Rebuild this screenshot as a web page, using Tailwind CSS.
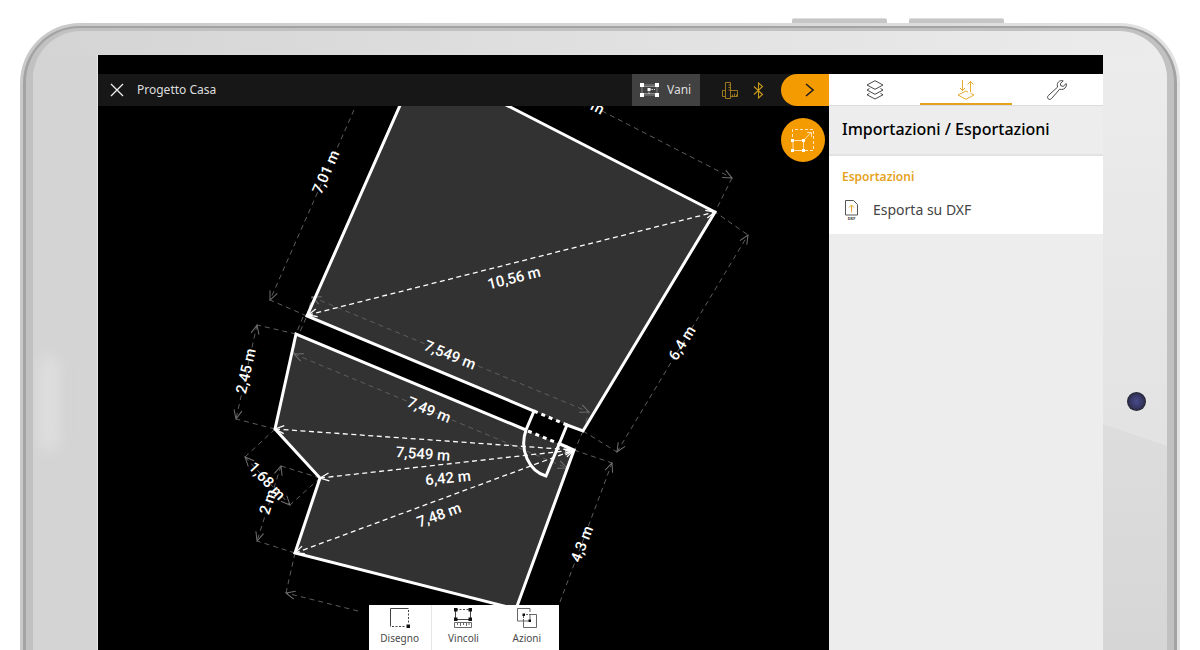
<!DOCTYPE html>
<html lang="it">
<head>
  <meta charset="UTF-8" />
  <meta name="viewport" content="width=device-width, initial-scale=1" />
  <title>Progetto Casa</title>
  <script src="https://cdn.jsdelivr.net/npm/@tailwindcss/browser@4"></script>
</head>
<body class="bg-white h-screen overflow-hidden flex flex-col px-5 font-['Noto_Sans',sans-serif]">

  <!-- Side keys of the tablet -->
  <div class="h-[23px] shrink-0 flex items-end justify-end gap-[22px] pr-[176px]">
    <div class="w-[95px] h-[5px] rounded-t-xs bg-[#c6c6c6] border-t border-[#dedede]"></div>
    <div class="w-[95px] h-[5px] rounded-t-xs bg-[#c6c6c6] border-t border-[#dedede]"></div>
  </div>

  <!-- Tablet frame -->
  <div class="flex-1 min-h-0 flex rounded-t-[60px] bg-[linear-gradient(to_right,#c9c9c9,#e2e2e2)] px-[3px] pt-[3px]">
    <div class="flex-1 flex rounded-t-[57px] bg-[#a3a3a3] px-[3px] pt-[2px]">
      <div class="flex-1 flex rounded-t-[54px] bg-[#c1c1c1] px-[7px] pt-[3px]">
        <div class="flex-1 min-w-0 flex flex-col rounded-t-[48px] overflow-hidden bg-[linear-gradient(to_right,#d4d4d4,#ececec)] pt-6">
          <div class="flex-1 min-h-0 flex">

            <!-- Left bezel -->
            <div class="w-[65px] shrink-0 relative bg-[#d4d4d4] border-r border-[#e8e8e8]">
              <div class="absolute left-2 top-[300px] w-4 h-24 rounded-full bg-[#e1e1e1] blur-sm"></div>
            </div>

            <!-- Screen -->
            <div class="flex-1 min-w-0 flex flex-col bg-black">
              <div class="h-[19px] shrink-0"></div>
              <div class="flex-1 min-h-0 flex">

                <main class="flex-1 min-w-0 flex flex-col">
                  <header class="h-8 shrink-0 flex items-center bg-[#171717] text-[#dedede]">
                    <button aria-label="Chiudi" class="ml-3 w-[14px] h-[14px]">
                      <svg viewBox="0 0 14 14" fill="none" stroke="#eee" stroke-width="1.3"><path d="M1 1l12 12M13 1L1 13" /></svg>
                    </button>
                    <h1 class="ml-[13px] text-[12px] leading-4">Progetto Casa</h1>
                    <button class="ml-auto h-8 w-[68px] flex items-center gap-2 pl-2 bg-[#414141] text-[12px] leading-4">
                      <svg class="w-[19px] h-[14px]" viewBox="0 0 19 14" fill="none" stroke="#aaa">
                        <path d="M2 2h15v10H2zM1 3.500h17M1 10.500h17" stroke-width=".7" />
                        <path d="M9 6.500h6M9 7v4" stroke="#ddd" stroke-dasharray="1.500 1" />
                        <path d="M0 0h4v4H0zM15 0h4v4h-4zM0 10h4v4H0zM15 10h4v4h-4zM7.500 5h3v3h-3z" fill="#fff" stroke="none" />
                      </svg>
                      Vani
                    </button>
                    <button aria-label="Misure" class="ml-[22px] w-4 h-[17px]">
                      <svg viewBox="0 0 16 17" fill="none" stroke="#a98220" stroke-width=".9">
                        <path d="M3.500.5h5v16h-5zM3.500 8.500h-3v6h3M8.500 8.500h7v6h-7M6.500 3h2M6.500 5.500h2M6.500 8h2M10.500 14.500v-2M12.500 14.500v-3M14.500 14.500v-2" />
                      </svg>
                    </button>
                    <button aria-label="Bluetooth" class="ml-[15px] w-[11px] h-[17px]">
                      <svg viewBox="0 0 11 17" fill="none" stroke="#c79a1c" stroke-width="1.100"><path d="M1 4.500l8.500 8L5.500 16V1l4 3.500-8.500 8" /></svg>
                    </button>
                    <button aria-label="Comprimi pannello" class="ml-[17px] w-12 h-8 rounded-l-full bg-[#f39b00] flex items-center justify-center pl-2">
                      <svg class="w-[9px] h-[14px]" viewBox="0 0 9 14" fill="none" stroke="#1c1c1c" stroke-width="1.500"><path d="M1 1l7 6-7 6" /></svg>
                    </button>
                  </header>

                  <!-- Floor plan -->
                  <div class="flex-1 min-h-0 relative overflow-hidden">
                    <svg class="w-full h-full" viewBox="98 106 731 544" preserveAspectRatio="xMinYMin slice" fill="none">
                      <defs>
                        <marker id="arrow" viewBox="0 0 12 10" refX="11" refY="5" markerWidth="12" markerHeight="10" markerUnits="userSpaceOnUse" orient="auto-start-reverse">
                          <path d="M2 1l9 4-9 4" stroke="#fff" stroke-width="1.300" fill="none" />
                        </marker>
                        <marker id="arrow-dim" viewBox="0 0 12 10" refX="11" refY="5" markerWidth="12" markerHeight="10" markerUnits="userSpaceOnUse" orient="auto-start-reverse">
                          <path d="M2 1l9 4-9 4" stroke="#707070" fill="none" />
                        </marker>
                      </defs>

                      <!-- rooms -->
                      <g fill="#323232">
                        <path d="M409 85L307 316 534 411 567 425 583 431 715 212 473 88z" />
                        <path d="M296 334L275 429 320 478 295 553 516 609 574 450z" />
                      </g>

                      <!-- outer dimensions -->
                      <g stroke="#5e5e5e" stroke-dasharray="5 4">
                        <path d="M307 316L270 300M732 178L715 212L748 235M583 431L617 452M574 450L612 463M307 316L312 297M583 431L589 412M306 318L299 334M303 317L296 334M296 334L294 354M583 431L567 468" />
                        <path d="M296 334L257 325M275 429L236 419M275 429L245 457M320 478L290 505M320 478L281 466M295 553L257 541M295 553L286 593" />
                        <g marker-end="url(#arrow-dim)">
                          <path d="M354 110L270 300" />
                          <path d="M602 111L732 178" />
                          <path d="M560 602L612 463" />
                          <path d="M358 611L286 593" />
                        </g>
                        <g marker-start="url(#arrow-dim)" marker-end="url(#arrow-dim)">
                          <path d="M617 452L748 235" />
                          <path d="M312 297L589 412" />
                          <path d="M294 354L567 468" />
                          <path d="M257 325L236 419" />
                          <path d="M245 457L290 505" />
                          <path d="M281 466L257 541" />
                        </g>
                      </g>

                      <!-- diagonals -->
                      <g stroke="#fff" stroke-width="1.300" stroke-dasharray="5 3.500" marker-start="url(#arrow)" marker-end="url(#arrow)">
                        <path d="M308 315L715 212" />
                        <path d="M275 429L574 450" />
                        <path d="M320 478L574 450" />
                        <path d="M295 553L574 450" />
                      </g>

                      <!-- walls and door -->
                      <g stroke="#fff" stroke-width="3">
                        <path d="M409 85L307 316 534 411 526 430C519 450 529 471 546 476L567 425 583 431 715 212 473 88" />
                        <path d="M526 430L296 334 275 429 320 478 295 553 516 609 574 450 560 444" />
                        <path d="M534 411L567 425M528 431L560 444" stroke-dasharray="4 4" />
                      </g>

                      <g fill="#fff" text-anchor="middle" class="[font-family:Roboto,sans-serif] font-medium text-[15px]">
                        <text transform="translate(326 172) rotate(-66)" y="5">7,01 m</text>
                        <text transform="translate(583 100) rotate(27)" y="5">7,04 m</text>
                        <text transform="translate(682 343) rotate(-58)" y="5">6,4 m</text>
                        <text transform="translate(582 544) rotate(-69)" y="5">4,3 m</text>
                        <text transform="translate(514 278) rotate(-14)" y="5">10,56 m</text>
                        <text transform="translate(450 355) rotate(22)" y="5">7,549 m</text>
                        <text transform="translate(429 410) rotate(22)" y="5">7,49 m</text>
                        <text transform="translate(423 454) rotate(4)" y="5">7,549 m</text>
                        <text transform="translate(448 478) rotate(-6)" y="5">6,42 m</text>
                        <text transform="translate(439 515) rotate(-20)" y="5">7,48 m</text>
                        <text transform="translate(246 371) rotate(-77)" y="5">2,45 m</text>
                        <text transform="translate(267 481) rotate(47)" y="5">1,68 m</text>
                        <text transform="translate(268 502) rotate(-72)" y="5">2 m</text>
                      </g>
                    </svg>

                    <button aria-label="Ridimensiona" class="absolute top-3 right-1 w-11 h-11 rounded-full bg-[#f39b00] flex items-center justify-center">
                      <svg class="w-6 h-6" viewBox="0 0 24 24" fill="none" stroke="#ffe9c4">
                        <path d="M1.500 9V1.500h21v21H14" stroke-dasharray="3 2" />
                        <path d="M2 12.500h10.500v10H2zM12.500 12.500l7.500-8M16 4.500h4.500V9" stroke-width=".9" />
                        <path d="M0 11h3v3H0zM11 11h3v3h-3zM0 21h3v3H0zM11 21h3v3h-3z" fill="#fff" stroke="none" />
                      </svg>
                    </button>

                    <!-- Bottom toolbar -->
                    <nav class="absolute bottom-0 left-1/2 -translate-x-1/2 w-[190px] h-[45px] grid grid-cols-3 bg-white text-[#4a4a4a] text-[10px] leading-4">
                      <button class="flex flex-col items-center justify-start pt-[3px] gap-[2px] border-r border-[#e6e6e6]">
                        <svg class="w-5 h-5" viewBox="0 0 20 20" fill="none" stroke="#444">
                          <path d="M18.500.5H.5v18" />
                          <path d="M18.500 2v14M2 18.500h14" stroke-dasharray="2 1.500" />
                          <path d="M16.500 16.500h3.500v3.500h-3.500z" fill="#111" stroke="none" />
                        </svg>
                        Disegno
                      </button>
                      <button class="flex flex-col items-center justify-start pt-[3px] gap-[2px]">
                        <svg class="w-5 h-5" viewBox="0 0 20 20" fill="none" stroke="#444">
                          <path d="M2.500 2v10M17.500 2v10M3 11.500h14" />
                          <path d="M3 1.500h14" stroke-dasharray="2 1.500" />
                          <path d="M1.500 14.500h17v5h-17zM4.500 15v2M7.500 15v3M10.500 15v2M13.500 15v3M16 15v2" stroke-width=".8" />
                          <path d="M1 0h3.500v3.500H1zM15.500 0H19v3.500h-3.500zM1 9.500h3.500V13H1zM15.500 9.500H19V13h-3.500z" fill="#111" stroke="none" />
                        </svg>
                        Vincoli
                      </button>
                      <button class="flex flex-col items-center justify-start pt-[3px] gap-[2px]">
                        <svg class="w-5 h-5" viewBox="0 0 20 20" fill="none" stroke="#555" stroke-width=".9">
                          <path d="M13 4V.5H.5v12.500H6M13 6.500h6.500v13H6.500V13M13 6.500v6.500H6.500" />
                          <path d="M6.500 13V6.500H13" stroke-dasharray="2 1" />
                          <path d="M5.500 5.500H8V8H5.500zM11.500 11.500H14V14h-2.500z" fill="#111" stroke="none" />
                        </svg>
                        Azioni
                      </button>
                    </nav>
                  </div>
                </main>

                <!-- Side panel -->
                <aside class="w-[274px] shrink-0 flex flex-col bg-[#ededed]">
                  <nav class="h-8 shrink-0 grid grid-cols-3 bg-white border-b border-[#dcdcdc]">
                    <button aria-label="Livelli" class="flex items-center justify-center">
                      <svg class="w-[18px] h-5" viewBox="0 0 18 20" fill="none" stroke="#333" stroke-width=".9">
                        <path d="M9 .7l8 4.300-8 4.300L1 5z" />
                        <path d="M3.500 8.500L1 10l8 4.300L17 10l-2.500-1.500M3.500 13.300L1 14.800 9 19l8-4.200-2.500-1.500" />
                      </svg>
                    </button>
                    <button aria-label="Importazioni / Esportazioni" class="flex items-center justify-center pt-[3px] border-b-2 border-[#e5a21c]">
                      <svg class="w-[18px] h-5" viewBox="0 0 18 20" fill="none" stroke="#e5a21c" stroke-width=".9">
                        <path d="M5.500 0v10.500M3 8l2.500 2.500L8 8M13.500 12V1.500M10.500 4.500l3-3 3 3M7 12l-6 3 8 4.300 8-4.300-3.500-1.800M7 12l2-1 2 1" />
                      </svg>
                    </button>
                    <button aria-label="Impostazioni" class="flex items-center justify-center">
                      <svg class="w-5 h-5" viewBox="0 0 20 20" fill="none" stroke="#333" stroke-width=".9">
                        <path d="M16.200.9C13.500-.2 10.500 1.800 10.300 4.500c0 1 .1 1.800.4 2.500L1.300 15.600c-1.100 1.100-.8 2.500 0 3.300s2.200.8 3.200-.3l8.200-9.400c2.500.9 5.500-.2 6.500-3 .3-.9.300-1.900 0-2.700l-3 2.900-2.400-.7-.5-2z" />
                      </svg>
                    </button>
                  </nav>
                  <h2 class="h-[50px] shrink-0 flex items-center pl-[13px] pb-[3px] border-b-2 border-[#e2e2e2] text-[16px] leading-5 font-medium text-black">Importazioni / Esportazioni</h2>
                  <section class="bg-white pl-[13px] pt-3 pb-3">
                    <h3 class="text-[12px] leading-[18px] font-semibold text-[#e5a21c]">Esportazioni</h3>
                    <button class="mt-3 h-6 flex items-center text-[14px] leading-5 text-[#444]">
                      <svg class="w-4 h-5 mr-[15px]" viewBox="0 0 16 20" fill="none" stroke="#555">
                        <path d="M3.500.5h8l4 4v10.500h-12z" />
                        <path d="M9.500 12.500V5M7 7.500L9.500 5 12 7.500" stroke="#e9aa3a" />
                        <text x="9.500" y="19.500" text-anchor="middle" fill="#333" stroke="none" class="text-[4px] font-bold">DXF</text>
                      </svg>
                      Esporta su DXF
                    </button>
                  </section>
                </aside>
              </div>
            </div>

            <!-- Right bezel with the camera -->
            <div class="w-16 shrink-0 relative bg-[linear-gradient(#ececec,#e3e3e3_370px)]">
              <div class="absolute inset-x-0 bottom-0 top-[369px] bg-[linear-gradient(#dddddd,#d6d6d6)] [clip-path:polygon(0_0,100%_22px,100%_100%,0_100%)]"></div>
              <div class="absolute top-[337px] left-6 w-[19px] h-[19px] rounded-full bg-[radial-gradient(#494b8c,#35365f_50%,#22232b_72%)]"></div>
            </div>
          </div>
        </div>
      </div>
    </div>
  </div>

</body>
</html>
